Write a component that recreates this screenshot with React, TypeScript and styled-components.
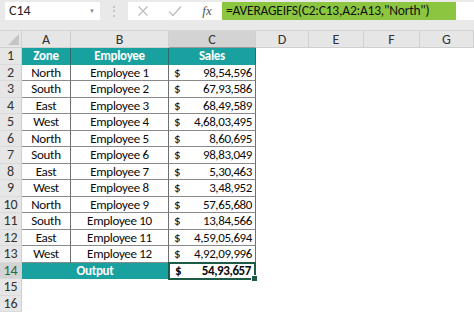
import * as React from "react";
import styled, { createGlobalStyle } from "styled-components";

const GlobalStyle = createGlobalStyle`
  html, body {
    margin: 0;
    padding: 0;
    background: #ffffff;
  }
  body {
    font-family: Carlito, Lato, "Liberation Sans", sans-serif;
  }
`;

const Page = styled.div`
  width: 474px;
  height: 312px;
  overflow: hidden;
  background: #ffffff;
`;

const FormulaBar = styled.div`
  display: flex;
  align-items: center;
  height: 31px;
  padding: 0 0 9px 5px;
  box-sizing: border-box;
  background: #e9e9e9;
  border-bottom: 1px solid #d4d4d4;
`;

const NameBox = styled.div`
  display: flex;
  align-items: center;
  justify-content: space-between;
  width: 95px;
  height: 18px;
  box-sizing: border-box;
  padding: 0 5px 0 4px;
  background: #ffffff;
  font-size: 14px;
  color: #222;
`;

const Caret = styled.span`
  font-size: 6px;
  color: #888;
`;

const Dots = styled.span`
  width: 28px;
  text-align: center;
  color: #b5b5b5;
  font-size: 12px;
`;

const FormulaArea = styled.div`
  display: flex;
  align-items: center;
  flex: 1;
  height: 18px;
  background: #ffffff;
`;

const IconSlot = styled.span<{ $w: number }>`
  display: flex;
  align-items: center;
  justify-content: center;
  width: ${(p) => p.$w}px;
`;

const Fx = styled.span`
  font-family: "Liberation Serif", serif;
  font-style: italic;
  font-size: 13px;
  color: #555;
`;

const FormulaText = styled.div`
  display: flex;
  align-items: center;
  width: 234px;
  height: 18px;
  padding-left: 4px;
  box-sizing: border-box;
  background: #8cc640;
  font-size: 13.5px;
  letter-spacing: -0.2px;
  color: #111;
  white-space: nowrap;
`;

const Sheet = styled.div`
  display: grid;
  grid-template-columns: 22px 49px 98px 87px 53px 55px 56px 1fr;
  grid-template-rows: 17px repeat(16, 16.5px);
  font-size: 13px;
`;

const Corner = styled.div`
  position: relative;
  background: #e6e6e6;
  border-right: 1px solid #cfcfcf;
  border-bottom: 1px solid #cfcfcf;
  &::after {
    content: "";
    position: absolute;
    right: 2px;
    bottom: 2px;
    border-style: solid;
    border-width: 0 0 11px 11px;
    border-color: transparent transparent #c4c4c4 transparent;
  }
`;

const ColHead = styled.div<{ $active?: boolean }>`
  display: flex;
  align-items: center;
  justify-content: center;
  background: ${(p) => (p.$active ? "#d3d3d3" : "#e6e6e6")};
  border-right: 1px solid #cfcfcf;
  border-bottom: 1px solid ${(p) => (p.$active ? "#9a9a9a" : "#cfcfcf")};
  color: #333;
  font-size: 14px;
`;

const RowHead = styled.div<{ $active?: boolean }>`
  display: flex;
  align-items: center;
  justify-content: center;
  background: ${(p) => (p.$active ? "#d3d3d3" : "#e6e6e6")};
  border-right: 1px solid #cfcfcf;
  border-bottom: 1px solid #dadada;
  color: ${(p) => (p.$active ? "#1f6b45" : "#333")};
  font-size: 14px;
`;

const Cell = styled.div<{ $head?: boolean }>`
  display: flex;
  align-items: center;
  justify-content: center;
  padding: 0 4px;
  background: ${(p) => (p.$head ? "#19a19f" : "#ffffff")};
  color: ${(p) => (p.$head ? "#ffffff" : "#0a0a0a")};
  font-weight: ${(p) => (p.$head ? 700 : 400)};
  letter-spacing: -0.3px;
  border-right: 1px solid ${(p) => (p.$head ? "#2b6f6d" : "#6f6f6f")};
  border-bottom: 1px solid ${(p) => (p.$head ? "#19a19f" : "#8a8a8a")};
  overflow: hidden;
  white-space: nowrap;
`;

const OutputLabel = styled(Cell)`
  grid-column: span 2;
  border-right: 1px solid #19a19f;
`;

const Money = styled.div<{ $bold?: boolean; $selected?: boolean }>`
  position: relative;
  display: flex;
  align-items: center;
  justify-content: space-between;
  padding: 0 3px 0 5px;
  background: #ffffff;
  color: #0a0a0a;
  font-weight: ${(p) => (p.$bold ? 700 : 400)};
  letter-spacing: -0.4px;
  border-right: 1px solid #6f6f6f;
  border-bottom: 1px solid #8a8a8a;
  ${(p) =>
    p.$selected &&
    `
    border: 2px solid #1e5b47;
    margin: -1px 0 -1px -1px;
    &::after {
      content: "";
      position: absolute;
      right: -4px;
      bottom: -4px;
      width: 5px;
      height: 5px;
      background: #1e5b47;
      border: 1px solid #ffffff;
    }
  `}
`;

const Blank = styled.div``;

const rows = [
  ["North", "Employee 1", "98,54,596"],
  ["South", "Employee 2", "67,93,586"],
  ["East", "Employee 3", "68,49,589"],
  ["West", "Employee 4", "4,68,03,495"],
  ["North", "Employee 5", "8,60,695"],
  ["South", "Employee 6", "98,83,049"],
  ["East", "Employee 7", "5,30,463"],
  ["West", "Employee 8", "3,48,952"],
  ["North", "Employee 9", "57,65,680"],
  ["South", "Employee 10", "13,84,566"],
  ["East", "Employee 11", "4,59,05,694"],
  ["West", "Employee 12", "4,92,09,996"],
];

const cols = ["A", "B", "C", "D", "E", "F", "G"];

const blanks = () => [0, 1, 2, 3].map((i) => <Blank key={"b" + i} />);

export default function App() {
  return (
    <Page>
      <GlobalStyle />
      <FormulaBar>
        <NameBox>
          C14
          <Caret>▼</Caret>
        </NameBox>
        <Dots>⋮</Dots>
        <FormulaArea>
          <IconSlot $w={30}>
            <svg width="12" height="12" viewBox="0 0 12 12">
              <path d="M1.5 1.5 L10.5 10.5 M10.5 1.5 L1.5 10.5" stroke="#bdbdbd" strokeWidth="1.3" />
            </svg>
          </IconSlot>
          <IconSlot $w={34}>
            <svg width="14" height="12" viewBox="0 0 14 12">
              <path d="M1 6.5 L5 10.5 L13 1.5" stroke="#bdbdbd" strokeWidth="1.3" fill="none" />
            </svg>
          </IconSlot>
          <IconSlot $w={30}>
            <Fx>fx</Fx>
          </IconSlot>
          <FormulaText>=AVERAGEIFS(C2:C13,A2:A13,"North")</FormulaText>
        </FormulaArea>
      </FormulaBar>
      <Sheet>
        <Corner />
        {cols.map((c) => (
          <ColHead key={c} $active={c === "C"}>
            {c}
          </ColHead>
        ))}

        <RowHead>1</RowHead>
        <Cell $head>Zone</Cell>
        <Cell $head>Employee</Cell>
        <Cell $head>Sales</Cell>
        {blanks()}

        {rows.map((r, i) => (
          <React.Fragment key={i}>
            <RowHead>{i + 2}</RowHead>
            <Cell>{r[0]}</Cell>
            <Cell>{r[1]}</Cell>
            <Money>
              <span>$</span>
              <span>{r[2]}</span>
            </Money>
            {blanks()}
          </React.Fragment>
        ))}

        <RowHead $active>14</RowHead>
        <OutputLabel $head>Output</OutputLabel>
        <Money $bold $selected>
          <span>$</span>
          <span>54,93,657</span>
        </Money>
        {blanks()}

        <RowHead>15</RowHead>
        <Blank />
        <Blank />
        <Blank />
        {blanks()}
        <RowHead>16</RowHead>
      </Sheet>
    </Page>
  );
}
